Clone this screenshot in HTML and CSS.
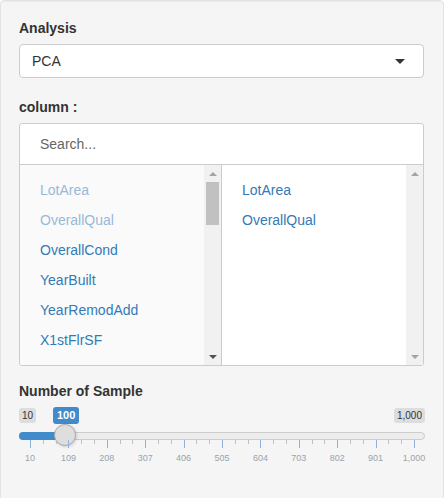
FILE: index.html
```html
<!DOCTYPE html>
<html>
<head>
<meta charset="utf-8">
<link rel="stylesheet" href="styles.css">
</head>
<body>
<div class="well">
  <div class="form-group">
    <label class="control-label">Analysis</label>
    <div class="select">
      <span class="select-value">PCA</span>
      <span class="caret"></span>
    </div>
  </div>

  <div class="form-group gap-col">
    <label class="control-label">column :</label>
    <div class="multi-wrapper">
      <div class="search-input">Search...</div>
      <div class="panes">
        <div class="pane non-selected">
          <div class="items">
            <a class="item selected">LotArea</a>
            <a class="item selected">OverallQual</a>
            <a class="item">OverallCond</a>
            <a class="item">YearBuilt</a>
            <a class="item">YearRemodAdd</a>
            <a class="item">X1stFlrSF</a>
          </div>
          <div class="scrollbar">
            <div class="sb-btn"><span class="arr-up"></span></div>
            <div class="sb-track"><div class="sb-thumb"></div></div>
            <div class="sb-btn"><span class="arr-down dark"></span></div>
          </div>
        </div>
        <div class="pane selected-pane">
          <div class="items">
            <a class="item">LotArea</a>
            <a class="item">OverallQual</a>
          </div>
          <div class="scrollbar">
            <div class="sb-btn"><span class="arr-up"></span></div>
            <div class="sb-track"></div>
            <div class="sb-btn"><span class="arr-down"></span></div>
          </div>
        </div>
      </div>
    </div>
  </div>

  <div class="form-group gap-slider">
    <label class="control-label slider-label">Number of Sample</label>
    <div class="irs">
      <span class="irs-min">10</span>
      <span class="irs-max">1,000</span>
      <span class="irs-single">100</span>
      <span class="irs-line"></span>
      <span class="irs-bar"></span>
      <span class="irs-handle"></span>
      <div class="irs-grid">
        <span class="pol" style="left:11px"></span>
        <span class="pol small" style="left:23.8px"></span>
        <span class="pol small" style="left:36.6px"></span>
        <span class="pol" style="left:49.4px"></span>
        <span class="pol small" style="left:62.2px"></span>
        <span class="pol small" style="left:75px"></span>
        <span class="pol" style="left:87.8px"></span>
        <span class="pol small" style="left:100.6px"></span>
        <span class="pol small" style="left:113.4px"></span>
        <span class="pol" style="left:126.2px"></span>
        <span class="pol small" style="left:139px"></span>
        <span class="pol small" style="left:151.8px"></span>
        <span class="pol" style="left:164.6px"></span>
        <span class="pol small" style="left:177.4px"></span>
        <span class="pol small" style="left:190.2px"></span>
        <span class="pol" style="left:203px"></span>
        <span class="pol small" style="left:215.8px"></span>
        <span class="pol small" style="left:228.6px"></span>
        <span class="pol" style="left:241.4px"></span>
        <span class="pol small" style="left:254.2px"></span>
        <span class="pol small" style="left:267px"></span>
        <span class="pol" style="left:279.8px"></span>
        <span class="pol small" style="left:292.6px"></span>
        <span class="pol small" style="left:305.4px"></span>
        <span class="pol" style="left:318.2px"></span>
        <span class="pol small" style="left:331px"></span>
        <span class="pol small" style="left:343.8px"></span>
        <span class="pol" style="left:356.6px"></span>
        <span class="pol small" style="left:369.4px"></span>
        <span class="pol small" style="left:382.2px"></span>
        <span class="pol" style="left:395px"></span>

        <span class="gtext" style="left:11px">10</span>
        <span class="gtext" style="left:49.4px">109</span>
        <span class="gtext" style="left:87.8px">208</span>
        <span class="gtext" style="left:126.2px">307</span>
        <span class="gtext" style="left:164.6px">406</span>
        <span class="gtext" style="left:203px">505</span>
        <span class="gtext" style="left:241.4px">604</span>
        <span class="gtext" style="left:279.8px">703</span>
        <span class="gtext" style="left:318.2px">802</span>
        <span class="gtext" style="left:356.6px">901</span>
        <span class="gtext" style="left:395px">1,000</span>
      </div>
    </div>
  </div>
</div>
</body>
</html>
```

FILE: styles.css
```css
* { box-sizing: border-box; }

html, body {
  margin: 0;
  padding: 0;
  background: #fff;
  font-family: "Liberation Sans", Arial, Helvetica, sans-serif;
  font-size: 14px;
  line-height: 20px;
  color: #333;
}

.well {
  width: 444px;
  height: 520px;
  background: #f5f5f5;
  border: 1px solid #e3e3e3;
  border-radius: 4px;
  padding: 17px 19px 0 18px;
  box-shadow: inset 0 1px 1px rgba(0,0,0,0.05);
}

.form-group { display: flex; flex-direction: column; }
.gap-col { margin-top: 19px; }
.gap-slider { margin-top: 15px; }

.control-label {
  display: block;
  font-weight: bold;
  font-size: 14px;
  line-height: 20px;
  margin-bottom: 6px;
  color: #333;
}

.select {
  height: 34px;
  background: #fff;
  border: 1px solid #ccc;
  border-radius: 4px;
  display: flex;
  align-items: center;
  justify-content: space-between;
  padding: 0 18px 0 12px;
}
.select-value { color: #333; font-size: 14px; }
.caret {
  width: 0;
  height: 0;
  border-left: 5px solid transparent;
  border-right: 5px solid transparent;
  border-top: 5px solid #333;
}

.multi-wrapper {
  border: 1px solid #ccc;
  border-radius: 3px;
  overflow: hidden;
  background: #fff;
}
.search-input {
  height: 41px;
  padding: 10px 20px;
  border-bottom: 1px solid #ccc;
  color: #666;
  font-size: 14px;
  line-height: 20px;
}
.panes {
  display: grid;
  grid-template-columns: 202px 1fr;
  height: 200px;
}
.pane {
  display: flex;
  height: 200px;
  overflow: hidden;
}
.non-selected { background: #fafafa; border-right: 1px solid #ccc; }
.selected-pane { background: #fff; }

.items {
  flex: 1;
  display: flex;
  flex-direction: column;
  padding-top: 10px;
}
.item {
  display: block;
  padding: 5px 20px;
  line-height: 20px;
  color: #337ab7;
  text-decoration: none;
}
.item.selected { opacity: 0.5; }

.scrollbar {
  width: 17px;
  flex: none;
  background: #f1f1f1;
  display: flex;
  flex-direction: column;
}
.sb-btn {
  height: 17px;
  display: flex;
  align-items: center;
  justify-content: center;
}
.sb-track { flex: 1; padding: 0 2px; }
.sb-thumb { height: 43px; background: #c1c1c1; }
.arr-up {
  width: 0; height: 0;
  border-left: 4px solid transparent;
  border-right: 4px solid transparent;
  border-bottom: 4px solid #a3a3a3;
}
.arr-down {
  width: 0; height: 0;
  border-left: 4px solid transparent;
  border-right: 4px solid transparent;
  border-top: 4px solid #a3a3a3;
}
.arr-down.dark { border-top-color: #505050; }

.slider-label { margin-bottom: 6px; }

.irs {
  position: relative;
  height: 60px;
  width: 406px;
}
.irs-min, .irs-max {
  position: absolute;
  top: 1px;
  font-size: 10px;
  line-height: 13px;
  padding: 1px 3px;
  color: #333;
  background: #ddd;
  border-radius: 3px;
}
.irs-min { left: 0; }
.irs-max { right: 0; }
.irs-single {
  position: absolute;
  top: 0;
  left: 34px;
  font-size: 11px;
  line-height: 15px;
  padding: 1px 4px;
  color: #fff;
  background: #428bca;
  border-radius: 3px;
  font-weight: bold;
}
.irs-line {
  position: absolute;
  top: 25px;
  left: 0;
  right: 0;
  height: 8px;
  background: #ededed;
  border: 1px solid #ccc;
  border-radius: 16px;
}
.irs-bar {
  position: absolute;
  top: 25px;
  left: 0;
  width: 46px;
  height: 8px;
  background: #428bca;
  border-radius: 16px 0 0 16px;
}
.irs-handle {
  position: absolute;
  top: 17px;
  left: 35px;
  width: 22px;
  height: 22px;
  border-radius: 50%;
  border: 1px solid #aaa;
  background: #dedede;
  box-shadow: 1px 1px 3px rgba(0,0,0,0.15);
}
.irs-grid {
  position: absolute;
  top: 33px;
  left: 0;
  right: 0;
  height: 27px;
}
.pol {
  position: absolute;
  top: 0;
  width: 1px;
  height: 8px;
  background: #8db4dc;
}
.pol.small { height: 4px; background: #b9c0c6; }
.gtext {
  position: absolute;
  top: 12px;
  font-size: 9px;
  line-height: 12px;
  color: #99a4ac;
  transform: translateX(-50%);
  white-space: nowrap;
}
```
